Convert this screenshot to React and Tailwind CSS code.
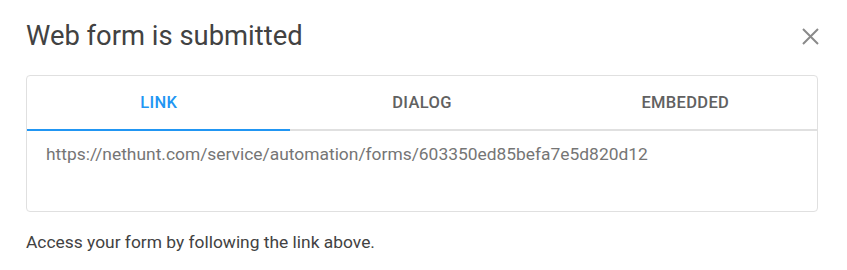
import React, { useState } from 'react';

const tabs = ['Link', 'Dialog', 'Embedded'];

const App = () => {
  const [active, setActive] = useState(0);

  return (
    <div className="w-[847px] h-[270px] bg-white font-['Roboto',sans-serif] px-[26px] pt-[20px]">
      {/* Header */}
      <div className="flex items-center justify-between h-[32px]">
        <h2 className="text-[27.4px] leading-[32px] text-[#424242] font-normal">Web form is submitted</h2>
        <button className="mr-[2px] text-[#8a8a8a]">
          <svg width="17" height="17" viewBox="0 0 17 17" fill="none" stroke="currentColor" strokeWidth="2">
            <path d="M1 1L16 16M16 1L1 16" />
          </svg>
        </button>
      </div>

      {/* Tabs card */}
      <div className="mt-[23px] w-[792px] h-[137px] border border-[#e0e0e0] rounded-[4px] flex flex-col">
        <div className="flex border-b-2 border-[#e0e0e0] h-[55px]">
          {tabs.map((t, i) => (
            <button
              key={t}
              onClick={() => setActive(i)}
              className={`flex-1 -mb-[2px] border-b-2 pt-[2px] text-[16.5px] font-medium uppercase tracking-[0.02em] ${
                active === i ? 'border-[#2196f3] text-[#2196f3]' : 'border-transparent text-[#616161]'
              }`}
            >
              {t}
            </button>
          ))}
        </div>
        <div className="px-[19px] pt-[13px] text-[17.4px] leading-[20px] text-[#757575]">
          https://nethunt.com/service/automation/forms/603350ed85befa7e5d820d12
        </div>
      </div>

      <p className="mt-[20px] text-[17.4px] leading-[20px] text-[#424242]">Access your form by following the link above.</p>
    </div>
  );
};

export default App;
